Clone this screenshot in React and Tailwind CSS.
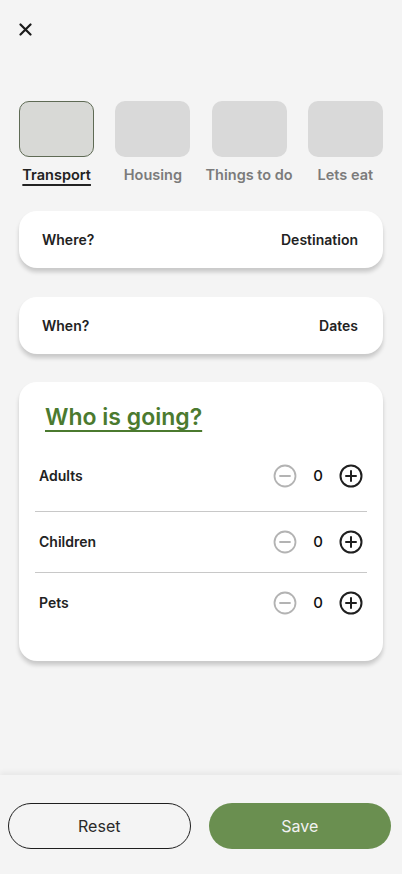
import { useState } from 'react';

const categories = ['Transport', 'Housing', 'Things to do', 'Lets eat'];

const MinusIcon = () => (
  <svg width="24" height="24" viewBox="0 0 24 24" fill="none" stroke="#b3b3b3" strokeWidth="1.8" strokeLinecap="round">
    <circle cx="12" cy="12" r="10.5" />
    <path d="M7 12h10" />
  </svg>
);

const PlusIcon = () => (
  <svg width="24" height="24" viewBox="0 0 24 24" fill="none" stroke="#1f1f1f" strokeWidth="2" strokeLinecap="round">
    <circle cx="12" cy="12" r="10.5" />
    <path d="M7 12h10M12 7v10" />
  </svg>
);

const CounterRow = ({ label, value }) => (
  <div className="flex items-center justify-between h-[30px] pl-1 pr-1">
    <span className="text-[14px] font-semibold text-[#222]">{label}</span>
    <div className="flex items-center">
      <MinusIcon />
      <span className="w-[42px] text-center text-[15px] font-medium text-[#111]">{value}</span>
      <PlusIcon />
    </div>
  </div>
);

export default function App() {
  const [active] = useState(0);

  return (
    <div
      className="min-h-[874px] flex flex-col bg-[#f4f4f4]"
      style={{ fontFamily: 'Inter, "Noto Sans", sans-serif' }}
    >
      <div className="flex-1 px-[19px]">
        {/* Close */}
        <div className="pt-[23px]">
          <svg width="13" height="13" viewBox="0 0 13 13" stroke="#1a1a1a" strokeWidth="2.2" strokeLinecap="round">
            <path d="M1.5 1.5l10 10M11.5 1.5l-10 10" />
          </svg>
        </div>

        {/* Categories */}
        <div className="mt-[65px] grid grid-cols-4 gap-[21px]">
          {categories.map((c, i) => (
            <div key={c} className="flex flex-col items-center">
              <div
                className={`w-[75px] h-[56px] rounded-[10px] ${
                  i === active ? 'bg-[#d8d9d6] border border-[#5f6b55]' : 'bg-[#d9d9d9]'
                }`}
              />
              <span
                className={`mt-[7px] text-[14.5px] font-semibold whitespace-nowrap ${
                  i === active
                    ? 'text-[#222] underline underline-offset-[4px] decoration-[1.5px]'
                    : 'text-[#7b7b7b]'
                }`}
              >
                {c}
              </span>
            </div>
          ))}
        </div>

        {/* Where */}
        <div className="mt-[25px] h-[57px] rounded-[18px] bg-white shadow-[0_4px_4px_rgba(0,0,0,0.18)] flex items-center justify-between pl-[23px] pr-[25px]">
          <span className="text-[14px] font-semibold text-[#222]">Where?</span>
          <span className="text-[14px] font-semibold text-[#222]">Destination</span>
        </div>

        {/* When */}
        <div className="mt-[29px] h-[57px] rounded-[18px] bg-white shadow-[0_4px_4px_rgba(0,0,0,0.18)] flex items-center justify-between pl-[23px] pr-[25px]">
          <span className="text-[14px] font-semibold text-[#222]">When?</span>
          <span className="text-[14px] font-semibold text-[#222]">Dates</span>
        </div>

        {/* Who */}
        <div className="mt-[28px] h-[279px] rounded-[18px] bg-white shadow-[0_4px_4px_rgba(0,0,0,0.18)] pt-[20px] px-4">
          <h2 className="pl-[10px] text-[23px] leading-[30px] font-semibold text-[#4b7a2f] underline underline-offset-[5px] decoration-[1.5px]">
            Who is going?
          </h2>
          <div className="mt-[29px]">
            <CounterRow label="Adults" value={0} />
          </div>
          <div className="mt-[20px] border-t border-[#c8c8c8]" />
          <div className="mt-[15px]">
            <CounterRow label="Children" value={0} />
          </div>
          <div className="mt-[15px] border-t border-[#c8c8c8]" />
          <div className="mt-[15px]">
            <CounterRow label="Pets" value={0} />
          </div>
        </div>
      </div>

      {/* Bottom bar */}
      <div className="mt-[114px] h-[99px] bg-[#f4f4f4] shadow-[0_-3px_5px_rgba(0,0,0,0.05)] pt-[28px] pl-2 pr-[11px] grid grid-cols-2 gap-[18px]">
        <button className="h-[46px] rounded-full border border-[#1f1f1f] text-[16px] font-normal text-[#2a2a2a]">
          Reset
        </button>
        <button className="h-[46px] rounded-full bg-[#6a8f50] text-[16px] font-normal text-[#f2f2f2]">
          Save
        </button>
      </div>
    </div>
  );
}
